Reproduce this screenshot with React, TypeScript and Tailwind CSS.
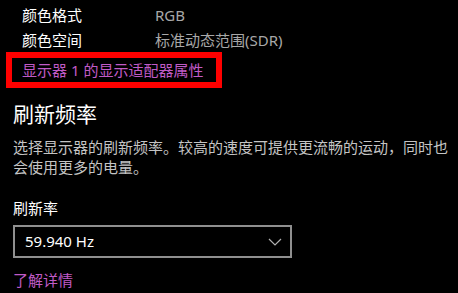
export default function App() {
  const font = { fontFamily: '"Noto Sans", "Noto Sans CJK SC", sans-serif' };
  return (
    <div
      className="w-[458px] h-[293px] bg-black overflow-hidden flex flex-col"
      style={font}
    >
      <div className="pt-[2px] flex flex-col">
        <div className="h-[26px] flex items-center text-[15px] leading-none">
          <span className="w-[155px] pl-[22px] text-white">颜色格式</span>
          <span className="text-[#a8a8a8]">RGB</span>
        </div>
        <div className="h-[24px] flex items-center text-[15px] leading-none">
          <span className="w-[155px] pl-[22px] text-white">颜色空间</span>
          <span className="text-[#a8a8a8]">标准动态范围(SDR)</span>
        </div>
      </div>
      <div className="ml-[6px] w-[216px] h-[36px] border-[6px] border-[#ff0000] flex items-center pl-[10px]">
        <span className="text-[15px] leading-none text-[#c05bc7] whitespace-nowrap">
          显示器 1 的显示适配器属性
        </span>
      </div>
      <div className="ml-[13px] mt-[12px] text-[21px] leading-[28px] text-white">
        刷新频率
      </div>
      <div className="ml-[13px] mt-[9px] w-[445px] text-[15px] leading-[20px] text-[#c4c4c4]">
        选择显示器的刷新频率。较高的速度可提供更流畅的运动，同时也会使用更多的电量。
      </div>
      <div className="ml-[13px] mt-[21px] text-[15px] leading-[20px] text-white">
        刷新率
      </div>
      <div className="ml-[13px] mt-[7px] w-[279px] h-[33px] border-2 border-[#8f8f8f] flex items-center justify-between pl-[10px] pr-[8px]">
        <span className="text-[15px] leading-none text-white">59.940 Hz</span>
        <svg width="14" height="8" viewBox="0 0 14 8" fill="none">
          <path d="M1 1 L7 7 L13 1" stroke="#b0b0b0" strokeWidth="1.2" />
        </svg>
      </div>
      <div className="ml-[13px] mt-[12px] text-[15px] leading-[20px] text-[#c05bc7]">
        了解详情
      </div>
    </div>
  );
}
